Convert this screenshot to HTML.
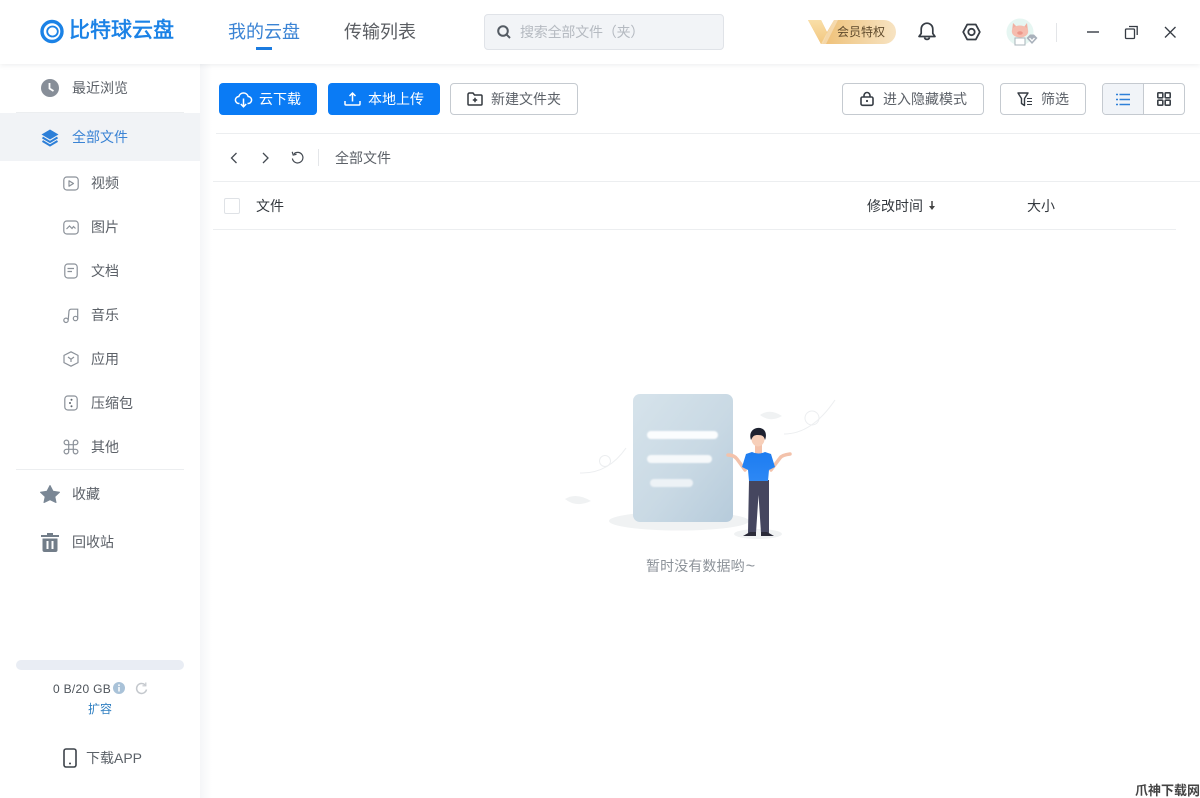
<!DOCTYPE html>
<html lang="zh-CN"><head><meta charset="utf-8"><title>比特球云盘</title>
<style>
html,body{margin:0;padding:0}
body{width:1200px;height:798px;position:relative;overflow:hidden;background:#fff;font-family:"Liberation Sans","Noto Sans CJK SC",sans-serif;color:#5c6168;font-size:14px}
.a{position:absolute;white-space:nowrap}
.t{position:absolute;white-space:nowrap;line-height:20px;font-size:14px}
svg{position:absolute;overflow:visible}
.btn{position:absolute;box-sizing:border-box;height:32px;top:83px;border-radius:4px}
.bl{background:#0a7bf5}
.ol{background:#fff;border:1px solid #c5cad0}
.ln{position:absolute;background:#eceef0;height:1px}
</style></head><body>
<!-- sidebar shadow and header -->
<div class="a" style="left:200px;top:64px;width:12px;height:734px;background:linear-gradient(90deg,#f5f6f8,#fff)"></div>
<div class="a" style="left:0;top:0;width:1200px;height:64px;background:#fff;box-shadow:0 1px 5px rgba(40,50,70,.09)"></div>

<!-- logo -->
<svg style="left:40px;top:19px" width="24" height="25" viewBox="0 0 24 25"><circle cx="12" cy="12.500" r="10" fill="none" stroke="#1b82e6" stroke-width="3.400"/><ellipse cx="12.500" cy="12.500" rx="5.300" ry="5" fill="none" stroke="#1b82e6" stroke-width="1.800"/></svg>
<div class="a" style="left:69px;top:17px;font-size:21px;line-height:28px;color:#1b82e6;-webkit-text-stroke:.6px #1b82e6">比特球云盘</div>
<!-- nav -->
<div class="a" style="left:228px;top:19px;font-size:18px;line-height:26px;color:#3a83d4">我的云盘</div>
<div class="a" style="left:256px;top:47px;width:16px;height:3px;background:#1b7be0"></div>
<div class="a" style="left:344px;top:19px;font-size:18px;line-height:26px;color:#5a5d62">传输列表</div>
<!-- search -->
<div class="a" style="left:484px;top:14px;width:240px;height:36px;box-sizing:border-box;background:#f2f4f7;border:1px solid #e0e3e8;border-radius:4px"></div>
<svg style="left:496px;top:24px" width="16" height="16" viewBox="0 0 16 16" fill="none" stroke="#555c64" stroke-width="2"><circle cx="7" cy="7" r="4.800"/><path d="M10.800 10.800L14 14"/></svg>
<div class="t" style="left:520px;top:22px;font-size:14px;letter-spacing:-.2px;color:#b5bac1">搜索全部文件（夹）</div>
<!-- VIP -->
<svg style="left:808px;top:20px" width="88" height="24" viewBox="0 0 88 24">
<defs><linearGradient id="v" x1="0" y1="0" x2="1" y2="0"><stop offset="0" stop-color="#eeb866"/><stop offset=".45" stop-color="#f1cd92"/><stop offset="1" stop-color="#f7e3c2"/></linearGradient>
<linearGradient id="v2" x1="0" y1="0" x2="0" y2="1"><stop offset="0" stop-color="#f9dfa8"/><stop offset="1" stop-color="#f2c77f"/></linearGradient></defs>
<path d="M0 0H13L19 12L26 0H76A12 12 0 0 1 76 24H13Z" fill="url(#v)"/>
<path d="M0 0H13L19 13L15 24H13Z" fill="url(#v2)"/>
<path d="M13 24L26 0H30L18 24Z" fill="#fff" opacity=".35"/>
</svg>
<div class="t" style="left:837px;top:22px;font-size:12px;color:#5f4a2c">会员特权</div>
<!-- bell -->
<svg style="left:917px;top:21px" width="20" height="21" viewBox="0 0 20 21" fill="none" stroke="#363c44" stroke-width="1.700" stroke-linejoin="round"><path d="M2 15.500H18L15.800 12.500V8A5.800 5.800 0 0 0 4.200 8V12.500Z"/><path d="M7.500 16.500A2.600 2.600 0 0 0 12.500 16.500"/></svg>
<!-- settings hex -->
<svg style="left:962px;top:22px" width="19" height="20" viewBox="0 0 19 20" fill="none" stroke="#363c44" stroke-width="1.800"><path d="M5.200 2.500H13.800L17.800 10L13.800 17.500H5.200L1.200 10Z" stroke-linejoin="round"/><circle cx="9.500" cy="10" r="3.200"/></svg>
<!-- avatar -->
<svg style="left:1006px;top:18px" width="34" height="30" viewBox="0 0 34 30"><circle cx="14" cy="14" r="13.500" fill="#e6f6f2"/><path d="M7 5L11 9H18L21 5L22 13H6Z" fill="#f0b0a2"/><ellipse cx="14" cy="13.500" rx="8.200" ry="6" fill="#f5bcae"/><ellipse cx="14" cy="15" rx="2.800" ry="1.700" fill="#ec978a"/><rect x="9" y="20" width="10" height="7" fill="#fff" stroke="#aab4bb"/><path d="M20.500 20L24 16.500H28L31.500 20L26 26Z" fill="#a9b1bb"/><path d="M23.500 20L26 22.800L28.500 20" fill="none" stroke="#fff" stroke-width="1.300"/></svg>
<div class="a" style="left:1056px;top:23px;width:1px;height:19px;background:#e3e5e8"></div>
<!-- window controls -->
<svg style="left:1086px;top:24px" width="14" height="14"><path d="M1 8H13" stroke="#363c44" stroke-width="1.400"/></svg>
<svg style="left:1124px;top:25px" width="15" height="15" viewBox="0 0 15 15" fill="none" stroke="#363c44" stroke-width="1.300"><rect x="1.500" y="4" width="9" height="9.500" rx="1"/><path d="M5 1.500H13.200V10"/></svg>
<svg style="left:1163px;top:25px" width="14" height="14" fill="none" stroke="#363c44" stroke-width="1.300"><path d="M2 2L12.500 12.500M12.500 2L2 12.500"/></svg>

<!-- sidebar -->
<svg style="left:41px;top:79px" width="18" height="18" viewBox="0 0 18 18"><circle cx="9" cy="9" r="9" fill="#878e98"/><path d="M8.500 4V9.500L12.500 12" fill="none" stroke="#fff" stroke-width="1.800"/></svg>
<div class="t" style="left:72px;top:78px;">最近浏览</div>
<div class="ln" style="left:16px;top:112px;width:168px"></div>
<div class="a" style="left:0;top:113px;width:200px;height:48px;background:#f1f3f6"></div>
<svg style="left:41px;top:129px" width="18" height="18" viewBox="0 0 18 18"><path d="M9 0.500L17.500 5.500L9 10.500L0.500 5.500Z" fill="#2d7fd8"/><path d="M1.500 8.500L9 13L16.500 8.500" fill="none" stroke="#2d7fd8" stroke-width="2"/><path d="M1.500 12L9 16.500L16.500 12" fill="none" stroke="#2d7fd8" stroke-width="2"/></svg>
<div class="t" style="left:72px;top:127px;color:#3a83d4">全部文件</div>

<svg style="left:63px;top:176px" width="16" height="15" viewBox="0 0 16 15" fill="none" stroke="#8b9199" stroke-width="1.200"><rect x=".8" y="1" width="14.400" height="13" rx="3"/><path d="M6 4.800L10.500 7.500L6 10.200Z" stroke-linejoin="round"/></svg>
<div class="t" style="left:91px;top:173px">视频</div>
<svg style="left:63px;top:220px" width="16" height="15" viewBox="0 0 16 15" fill="none" stroke="#8b9199" stroke-width="1.200"><rect x=".8" y="1" width="14.400" height="13" rx="3"/><path d="M3.500 9L6.500 6L9 8.500L10.500 6.500L12.500 8.500"/></svg>
<div class="t" style="left:91px;top:217px">图片</div>
<svg style="left:64px;top:263px" width="14" height="16" viewBox="0 0 14 16" fill="none" stroke="#8b9199" stroke-width="1.200"><rect x=".8" y="1" width="12.400" height="14" rx="3"/><path d="M3.500 5.500H10M3.500 8.500H8"/></svg>
<div class="t" style="left:91px;top:261px">文档</div>
<svg style="left:63px;top:308px" width="16" height="15" viewBox="0 0 16 15" fill="none" stroke="#8b9199" stroke-width="1.200"><circle cx="3" cy="12.300" r="2.200"/><circle cx="12.500" cy="10.500" r="2.200"/><path d="M5.200 12L6 3Q6.200 1.500 8 1.200H14.700V10.500"/></svg>
<div class="t" style="left:91px;top:305px">音乐</div>
<svg style="left:63px;top:351px" width="16" height="16" viewBox="0 0 16 16" fill="none" stroke="#8b9199" stroke-width="1.200"><path d="M8 .8L15 4.400V11.600L8 15.200L1 11.600V4.400Z" stroke-linejoin="round"/><path d="M5 6L8 8.200L11 6M8 8.200V11"/></svg>
<div class="t" style="left:91px;top:349px">应用</div>
<svg style="left:64px;top:395px" width="14" height="16" viewBox="0 0 14 16" fill="none" stroke="#8b9199" stroke-width="1.200"><rect x=".8" y="1" width="12.400" height="14" rx="3"/><circle cx="7.500" cy="4.700" r="1" fill="#5d646c" stroke="none"/><circle cx="6" cy="8" r="1" fill="#5d646c" stroke="none"/><circle cx="7.500" cy="11.200" r="1" fill="#5d646c" stroke="none"/></svg>
<div class="t" style="left:91px;top:393px">压缩包</div>
<svg style="left:63px;top:439px" width="16" height="16" viewBox="0 0 16 16" fill="none" stroke="#8b9199" stroke-width="1.200"><path d="M5.700 5.700H10.300V10.300H5.700ZM5.700 5.700V3.500A2.300 2.300 0 1 0 3.500 5.700H12.500A2.300 2.300 0 1 0 10.300 3.500V12.500A2.300 2.300 0 1 0 12.500 10.300H3.500A2.300 2.300 0 1 0 5.700 12.500Z"/></svg>
<div class="t" style="left:91px;top:437px">其他</div>
<div class="ln" style="left:16px;top:469px;width:168px"></div>
<svg style="left:40px;top:485px" width="20" height="18" viewBox="0 0 20 18"><path d="M10 .5L13 6.200L19.500 7.200L14.800 11.600L16 17.500L10 14.700L4 17.500L5.200 11.600L.5 7.200L7 6.200Z" fill="#7a8795" stroke="#7a8795" stroke-linejoin="round"/></svg>
<div class="t" style="left:72px;top:484px">收藏</div>
<svg style="left:41px;top:533px" width="18" height="19" viewBox="0 0 18 19"><path d="M6 0H12V2H18V4H0V2H6Z" fill="#727d89"/><path d="M1.500 5.500H16.500V17A2 2 0 0 1 14.500 19H3.500A2 2 0 0 1 1.500 17Z" fill="#727d89"/><path d="M6.500 8V16M11.500 8V16" stroke="#fff" stroke-width="2"/></svg>
<div class="t" style="left:72px;top:532px">回收站</div>

<div class="a" style="left:16px;top:660px;width:168px;height:10px;border-radius:5px;background:#e9edf4"></div>
<div class="t" style="left:53px;top:679px;font-size:12px;letter-spacing:.3px;color:#4d535a">0 B/20 GB</div>
<svg style="left:113px;top:682px" width="12" height="12"><circle cx="6" cy="6" r="6" fill="#a9c2d8"/><path d="M6 5V9.500" stroke="#fff" stroke-width="1.500"/><circle cx="6" cy="3.200" r=".9" fill="#fff"/></svg>
<svg style="left:135px;top:682px" width="13" height="13" viewBox="0 0 13 13" fill="none" stroke="#c4c8cd" stroke-width="1.500"><path d="M11.500 7.500A5 5 0 1 1 10 2.800"/><path d="M10.800 .5V3.800H7.500" stroke-width="1.200"/></svg>
<div class="t" style="left:88px;top:699px;font-size:12px;color:#2f7fc2">扩容</div>
<svg style="left:63px;top:748px" width="14" height="20" viewBox="0 0 14 20" fill="none" stroke="#3d434a" stroke-width="1.600"><rect x="1" y="1" width="12" height="18" rx="2"/><circle cx="7" cy="15.500" r="1" fill="#3d434a" stroke="none"/></svg>
<div class="t" style="left:86px;top:748px;color:#5b6168">下载APP</div>

<!-- toolbar -->
<div class="btn bl" style="left:219px;width:98px"></div>
<svg style="left:235px;top:91px" width="17" height="17" viewBox="0 0 17 17" fill="none" stroke="#fff" stroke-width="1.500"><path d="M4.500 12.500H4A3.500 3.500 0 0 1 3.800 5.500A4.900 4.900 0 0 1 13.200 5.500A3.500 3.500 0 0 1 13 12.500H12.500"/><path d="M8.500 7.500V15.500M5.800 13L8.500 15.800L11.200 13"/></svg>
<div class="t" style="left:259px;top:89px;color:#fff">云下载</div>
<div class="btn bl" style="left:328px;width:112px"></div>
<svg style="left:344px;top:92px" width="17" height="14" viewBox="0 0 17 14" fill="none" stroke="#fff" stroke-width="1.500"><path d="M8.500 9.500V1M5.500 4L8.500 1L11.500 4"/><path d="M1 9V12A1 1 0 0 0 2 13H15A1 1 0 0 0 16 12V9"/></svg>
<div class="t" style="left:368px;top:89px;color:#fff">本地上传</div>
<div class="btn ol" style="left:450px;width:128px"></div>
<svg style="left:467px;top:92px" width="16" height="14" viewBox="0 0 16 14" fill="none" stroke="#33383f" stroke-width="1.500"><path d="M1 2.500A1.500 1.500 0 0 1 2.500 1H6L7.500 3H14A1 1 0 0 1 15 4V12A1 1 0 0 1 14 13H2A1 1 0 0 1 1 12Z"/><path d="M8 5.800V10.200M5.800 8H10.200"/></svg>
<div class="t" style="left:491px;top:89px">新建文件夹</div>

<div class="btn ol" style="left:842px;width:142px"></div>
<svg style="left:860px;top:92px" width="14" height="14" viewBox="0 0 14 14" fill="none" stroke="#363c44" stroke-width="1.600"><rect x="1" y="5" width="12" height="8.300" rx="1.500"/><path d="M4 5V3.500A3 3 0 0 1 10 3.500V5"/><circle cx="7" cy="9" r="1.100" fill="#363c44" stroke="none"/></svg>
<div class="t" style="left:883px;top:89px">进入隐藏模式</div>
<div class="btn ol" style="left:1000px;width:86px"></div>
<svg style="left:1017px;top:92px" width="16" height="15" viewBox="0 0 16 15" fill="none" stroke="#363c44" stroke-width="1.400"><path d="M1 1H11L7.500 6.500V13.500L4.500 11.500V6.500Z" stroke-linejoin="round"/><path d="M10 6.500H15M10 9.500H15M10 12.500H15" stroke-width="1"/></svg>
<div class="t" style="left:1041px;top:89px">筛选</div>
<div class="btn ol" style="left:1102px;width:83px"></div>
<div class="a" style="left:1103px;top:84px;width:40px;height:30px;background:#f1f4f8;border-right:1px solid #c5cad0;border-radius:3px 0 0 3px"></div>
<svg style="left:1116px;top:93px" width="14" height="13" stroke="#2f80d8" stroke-width="1.600"><path d="M3.500 1.500H14M3.500 6.500H14M3.500 11.500H14M0 1.500H2M0 6.500H2M0 11.500H2"/></svg>
<svg style="left:1157px;top:92px" width="14" height="14" fill="none" stroke="#3a4047" stroke-width="1.600"><rect x=".8" y=".8" width="5" height="5" rx=".8"/><rect x="8.200" y=".8" width="5" height="5" rx=".8"/><rect x=".8" y="8.200" width="5" height="5" rx=".8"/><rect x="8.200" y="8.200" width="5" height="5" rx=".8"/></svg>
<div class="ln" style="left:216px;top:133px;width:984px"></div>

<!-- breadcrumb -->
<svg style="left:229px;top:152px" width="10" height="12" fill="none" stroke="#444a52" stroke-width="1.300"><path d="M7.500 1L2.500 6L7.500 11"/></svg>
<svg style="left:261px;top:152px" width="10" height="12" fill="none" stroke="#444a52" stroke-width="1.300"><path d="M2 1L7 6L2 11"/></svg>
<svg style="left:291px;top:151px" width="14" height="14" viewBox="0 0 14 14" fill="none" stroke="#444a52" stroke-width="1.200"><path d="M3 2.800A5.300 5.300 0 1 1 1.400 7.500"/><path d="M1.200 .8L2.200 4L5.500 3.300"/></svg>
<div class="a" style="left:318px;top:149px;width:1px;height:17px;background:#e4e6e9"></div>
<div class="t" style="left:335px;top:148px">全部文件</div>
<div class="ln" style="left:213px;top:181px;width:987px"></div>

<!-- table head -->
<div class="a" style="left:224px;top:198px;width:16px;height:16px;box-sizing:border-box;border:1px solid #dfe2e6;border-radius:2px"></div>
<div class="t" style="left:256px;top:196px;color:#33383e">文件</div>
<div class="t" style="left:867px;top:196px;color:#33383e">修改时间</div>
<svg style="left:928px;top:201px" width="8" height="10"><path d="M4 0V5" stroke="#444" stroke-width="1.500"/><path d="M1 5H7L4 9Z" fill="#444"/></svg>
<div class="t" style="left:1027px;top:196px;color:#33383e">大小</div>
<div class="ln" style="left:213px;top:229px;width:963px"></div>

<!-- empty illustration -->
<svg style="left:550px;top:380px" width="300" height="170" viewBox="0 0 300 170">
<defs><linearGradient id="d" x1="0" y1="0" x2="1" y2="1"><stop offset="0" stop-color="#d6e3eb"/><stop offset=".55" stop-color="#c9d9e4"/><stop offset="1" stop-color="#b6cbdb"/></linearGradient>
<linearGradient id="s" x1="0" y1="0" x2="0" y2="1"><stop offset="0" stop-color="#1d7cf0"/><stop offset="1" stop-color="#2d88f5"/></linearGradient>
<filter id="b" x="-10%" y="-50%" width="120%" height="200%"><feGaussianBlur stdDeviation=".7"/></filter></defs>
<ellipse cx="129" cy="141" rx="70" ry="9.500" fill="#f0f2f3"/>
<ellipse cx="208" cy="154" rx="24" ry="5" fill="#f0f2f3"/>
<rect x="83" y="14" width="100" height="128" rx="7" fill="url(#d)"/>
<g filter="url(#b)">
<rect x="97" y="51" width="71" height="8" rx="4" fill="#fbfdfe"/>
<rect x="97" y="75" width="65" height="8" rx="4" fill="#f6f9fb"/>
<rect x="100" y="99" width="43" height="8" rx="4" fill="#edf2f6"/>
</g>
<path d="M30 93Q58 94 76 68" fill="none" stroke="#eceef0" stroke-width="1"/>
<circle cx="55" cy="81" r="5.500" fill="none" stroke="#eceef0"/>
<path d="M15 119Q26 112 41 121Q26 128 15 119Z" fill="#f0f2f3"/>
<path d="M234 54Q262 54 285 20" fill="none" stroke="#eceef0"/>
<circle cx="262" cy="38" r="7" fill="none" stroke="#eceef0"/>
<path d="M210 35Q220 28 232 36Q220 43 210 35Z" fill="#f0f2f3"/>
<!-- person -->
<path d="M199 100L198 153H206L208.500 115L211 153H219L219 100Z" fill="#45465f"/>
<path d="M193 156L200 152H206V156Z M224 156L217 152H211V156Z" fill="#2a2a38"/>
<path d="M178 75Q184 75 187 79L195 90" fill="none" stroke="#f3c2ab" stroke-width="3.500" stroke-linecap="round"/>
<path d="M240 74Q232 75 230 78L221 90" fill="none" stroke="#f3c2ab" stroke-width="3.500" stroke-linecap="round"/>
<rect x="205" y="62" width="7" height="12" fill="#f3c2ab"/>
<path d="M202 72Q208 75 215 72L221 74L225 87L219 90L218 101H199L198 90L192 87L196 74Z" fill="url(#s)"/>
<ellipse cx="208" cy="59" rx="6.500" ry="7.500" fill="#f7cfb9"/>
<path d="M201 60C198 51 205 47 210 48C216 49 217 55 215 60C214 56 212 55 208 55C204 55 203 56 201 60Z" fill="#1e2230"/>
</svg>
<div class="t" style="left:646px;top:556px;color:#8c9299;letter-spacing:.1px">暂时没有数据哟<span style="margin-left:1px;font-size:16px">~</span></div>

<!-- watermark -->
<div class="a" style="left:1135px;top:783px;font-size:13px;line-height:15px;font-weight:700;color:#444">爪神下载网</div>
</body></html>
